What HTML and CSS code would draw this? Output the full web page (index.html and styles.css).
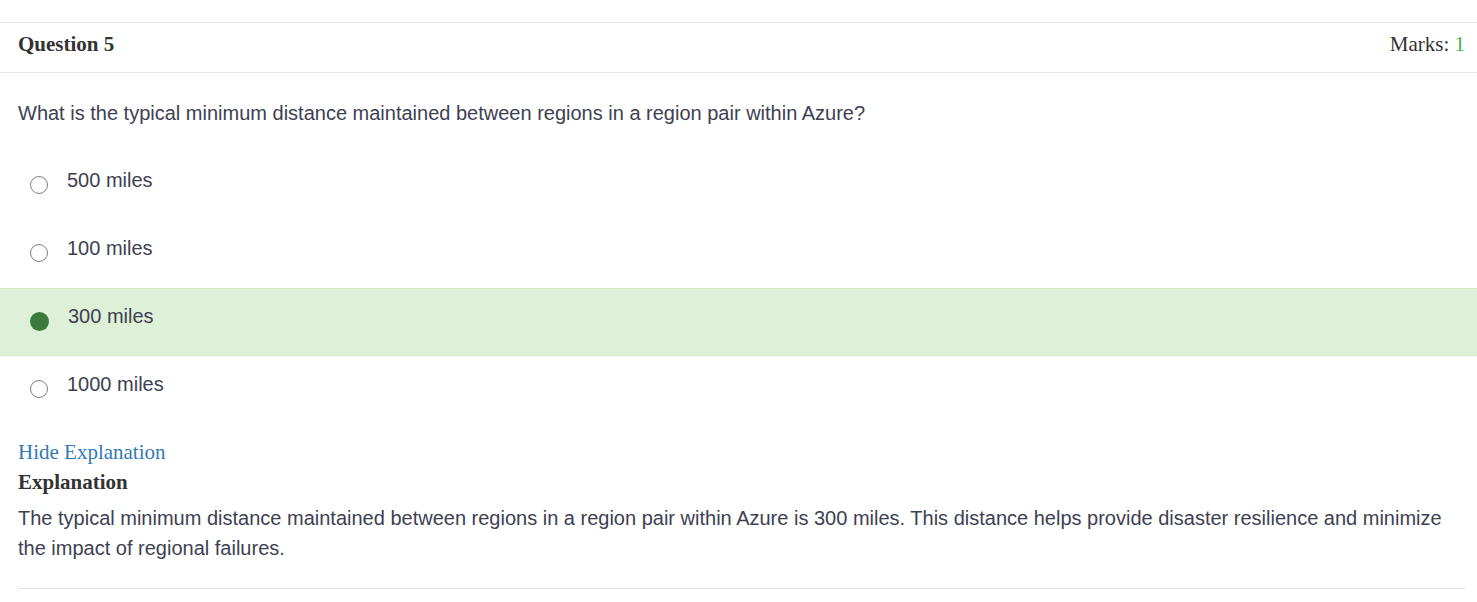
FILE: index.html
```html
<!DOCTYPE html>
<html>
<head>
<meta charset="utf-8">
<link rel="stylesheet" href="styles.css">
</head>
<body>
<div class="question">
  <div class="q-header">
    <span class="q-title">Question 5</span>
    <span class="q-marks">Marks: <span class="q-marks-val">1</span></span>
  </div>
  <p class="q-text">What is the typical minimum distance maintained between regions in a region pair within Azure?</p>
  <div class="options">
    <div class="option"><span class="radio"></span><span class="opt-label">500 miles</span></div>
    <div class="option"><span class="radio"></span><span class="opt-label">100 miles</span></div>
    <div class="option option-correct"><span class="radio radio-filled"></span><span class="opt-label">300 miles</span></div>
    <div class="option"><span class="radio"></span><span class="opt-label">1000 miles</span></div>
  </div>
  <div class="explanation">
    <a class="exp-toggle" href="#">Hide Explanation</a>
    <div class="exp-title">Explanation</div>
    <p class="exp-text">The typical minimum distance maintained between regions in a region pair within Azure is 300 miles. This distance helps provide disaster resilience and minimize the impact of regional failures.</p>
  </div>
</div>
</body>
</html>
```
FILE: styles.css
```css
html, body {
  margin: 0;
  padding: 0;
  background: #fff;
}
body {
  padding-top: 22px;
  font-family: "Liberation Sans", Arial, sans-serif;
}
.question {
  border-top: 1px solid #e3e3e8;
}
.q-header {
  box-sizing: border-box;
  height: 50px;
  display: flex;
  align-items: center;
  justify-content: space-between;
  padding: 0 12px 6px 18px;
  border-bottom: 1px solid #e6e6ea;
  font-family: "Liberation Serif", "Times New Roman", serif;
  font-size: 21px;
  color: #333;
}
.q-title {
  font-weight: bold;
}
.q-marks-val {
  color: #4cae4c;
}
.q-text {
  margin: 25px 0 24px;
  padding: 0 18px;
  font-size: 20px;
  line-height: 30px;
  color: #3d4152;
}
.options {
  display: flex;
  flex-direction: column;
}
.option {
  box-sizing: border-box;
  height: 68px;
  display: flex;
  align-items: flex-start;
  padding: 15px 0 0 30px;
  border-top: 1px solid transparent;
  border-bottom: 1px solid transparent;
}
.option-correct {
  background: #dff0d8;
  border-top-color: #d6e9c6;
  border-bottom-color: #d6e9c6;
}
.radio {
  box-sizing: border-box;
  width: 18px;
  height: 18px;
  border-radius: 50%;
  border: 1.5px solid #808080;
  margin-top: 8px;
  margin-right: 19px;
  flex-shrink: 0;
  background: #fff;
}
.radio-filled {
  border: none;
  background: #3b7a3b;
  width: 19px;
  height: 19px;
}
.opt-label {
  font-size: 20px;
  line-height: 24px;
  color: #3d4152;
}
.explanation {
  margin: 13px 12px 0 18px;
  padding-bottom: 25px;
  border-bottom: 1px solid #e3e3e8;
}
.exp-toggle {
  display: block;
  font-family: "Liberation Serif", "Times New Roman", serif;
  font-size: 21px;
  line-height: 30px;
  color: #337ab7;
  text-decoration: none;
}
.exp-title {
  font-family: "Liberation Serif", "Times New Roman", serif;
  font-size: 21px;
  line-height: 30px;
  font-weight: bold;
  color: #333;
}
.exp-text {
  margin: 6px 0 0;
  font-size: 20px;
  line-height: 30px;
  color: #3d4152;
}
```
